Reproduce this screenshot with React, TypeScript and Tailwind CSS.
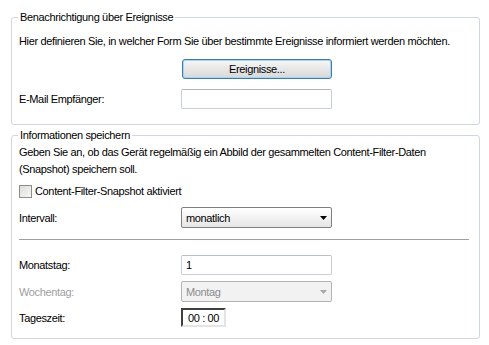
import React from 'react'

const font = { fontFamily: '"Liberation Sans", Arial, sans-serif' }

function Field({ label, children, muted }: { label: string; children: React.ReactNode; muted?: boolean }) {
  return (
    <div className="flex items-center">
      <span className={`w-[162px] shrink-0 ${muted ? 'text-[#a0a0a0]' : 'text-black'}`}>{label}</span>
      {children}
    </div>
  )
}

function Arrow({ muted }: { muted?: boolean }) {
  return (
    <svg width="7" height="4" viewBox="0 0 7 4" className="shrink-0">
      <path d="M0 0h7L3.5 4z" fill={muted ? '#a8a8a8' : '#000'} />
    </svg>
  )
}

export default function App() {
  return (
    <div className="w-[489px] h-[345px] bg-white pt-[10px] pl-[11px] pr-[9px] text-[11px] leading-[14px] tracking-[-0.35px] text-black" style={font}>
      <fieldset className="border border-[#d0d7e2] rounded-[3px] pl-[7px] pr-2 pb-[15px]">
        <legend className="px-[2px] ml-[-1px]">Benachrichtigung über Ereignisse</legend>
        <p className="mt-[10px] whitespace-nowrap">Hier definieren Sie, in welcher Form Sie über bestimmte Ereignisse informiert werden möchten.</p>
        <div className="mt-[11px] pl-[163px]">
          <button className="w-[150px] h-[20px] rounded-[3px] border border-[#3d7bad] bg-linear-to-b from-[#f7f7f7] to-[#d8d8d8] shadow-[inset_0_0_0_1px_#a6d6f3] text-[11px] leading-none">
            Ereignisse...
          </button>
        </div>
        <div className="mt-[10px]">
          <Field label="E-Mail Empfänger:">
            <div className="w-[151px] h-[20px] border border-[#c8ced6] border-t-[#b0b6bd] rounded-[2px] bg-white" />
          </Field>
        </div>
      </fieldset>

      <fieldset className="mt-[3px] border border-[#d0d7e2] rounded-[3px] pl-[7px] pr-[10px] pb-[11px]">
        <legend className="px-[2px] ml-[-1px]">Informationen speichern</legend>
        <p className="mt-[2px] leading-[17px] whitespace-nowrap">
          Geben Sie an, ob das Gerät regelmäßig ein Abbild der gesammelten Content-Filter-Daten
          <br />
          (Snapshot) speichern soll.
        </p>
        <label className="mt-[6px] flex items-center gap-[3px]">
          <span className="w-[13px] h-[13px] border border-[#8b8d8f] bg-linear-to-br from-[#dcdcd8] to-[#f8f8f6]" />
          <span>Content-Filter-Snapshot aktiviert</span>
        </label>
        <div className="mt-[9px]">
          <Field label="Intervall:">
            <div className="w-[151px] h-[21px] flex items-center justify-between pl-[4px] pr-[4px] border border-[#7f7f7f] rounded-[2px] bg-linear-to-b from-[#ffffff] to-[#e6e6e6]">
              <span>monatlich</span>
              <Arrow />
            </div>
          </Field>
        </div>
        <div className="mt-[11px] h-px bg-[#a0a0a0]" />
        <div className="mt-[15px] flex flex-col gap-[6px]">
          <Field label="Monatstag:">
            <div className="w-[151px] h-[20px] flex items-center pl-[4px] border border-[#c8ced6] border-t-[#b8bec5] rounded-[2px] bg-white">1</div>
          </Field>
          <Field label="Wochentag:" muted>
            <div className="w-[151px] h-[21px] flex items-center justify-between pl-[4px] pr-[4px] border border-[#b3b3b3] rounded-[2px] bg-[#f2f2f2] text-[#8c8c8c]">
              <span>Montag</span>
              <Arrow muted />
            </div>
          </Field>
        </div>
        <div className="mt-[6px]">
          <Field label="Tageszeit:">
            <div className="w-[45px] h-[19px] flex items-center justify-center border-2 border-t-[#404040] border-l-[#404040] border-r-[#e4e4e4] border-b-[#e4e4e4] bg-white">
              00 : 00
            </div>
          </Field>
        </div>
      </fieldset>
    </div>
  )
}
